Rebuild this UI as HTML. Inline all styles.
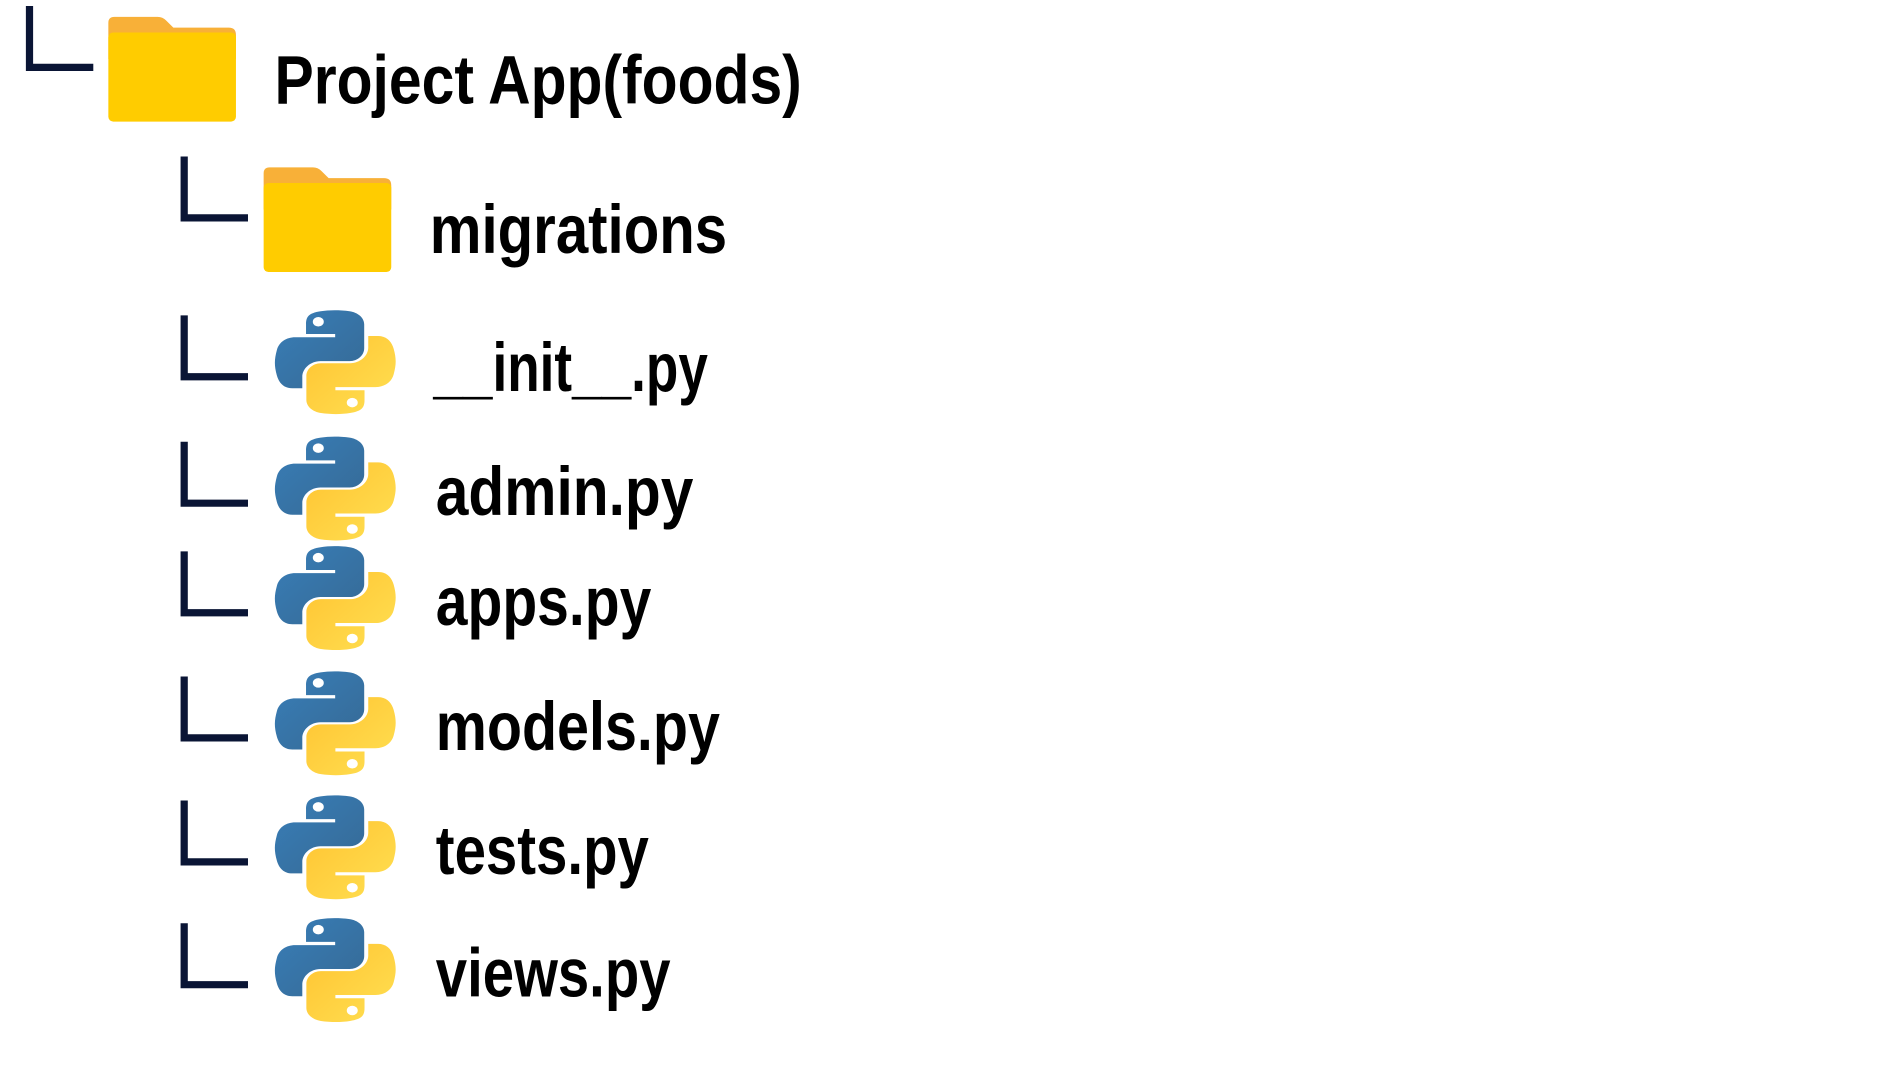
<!DOCTYPE html>
<html><head><meta charset="utf-8"><style>
html,body{margin:0;padding:0;background:#fff;}
svg{display:block;}
text{font-family:"Liberation Sans",sans-serif;font-weight:bold;fill:#000;}
</style></head><body>
<svg width="1878" height="1081" viewBox="0 0 1560 898" preserveAspectRatio="none" xmlns="http://www.w3.org/2000/svg">
<defs>
<linearGradient id="bl" x1="0" y1="0" x2="1" y2="1"><stop offset="0" stop-color="#387EB8"/><stop offset="1" stop-color="#366994"/></linearGradient>
<linearGradient id="yl" x1="0" y1="0" x2="1" y2="1"><stop offset="0" stop-color="#FFE052"/><stop offset="1" stop-color="#FFC331"/></linearGradient>
<g id="py">
<path fill="url(#bl)" d="M54.9,0.9c-4.6,0-9,0.4-12.8,1.1C30.8,4,28.8,8.1,28.8,15.8v10.1h26.6v3.4H18.8c-7.7,0-14.5,4.6-16.6,13.4c-2.4,10.1-2.5,16.4,0,26.9c1.9,7.8,6.4,13.4,14.1,13.4h9.1V70.9c0-8.8,7.6-16.5,16.6-16.5h26.6c7.4,0,13.3-6.1,13.3-13.5V15.8c0-7.2-6.1-12.6-13.3-13.8C64.1,1.2,59.4,0.9,54.9,0.9z"/>
<ellipse cx="40" cy="13" rx="5" ry="5" fill="#fff"/>
<g transform="rotate(180 55.5 55.5)">
<path fill="url(#yl)" d="M54.9,0.9c-4.6,0-9,0.4-12.8,1.1C30.8,4,28.8,8.1,28.8,15.8v10.1h26.6v3.4H18.8c-7.7,0-14.5,4.6-16.6,13.4c-2.4,10.1-2.5,16.4,0,26.9c1.9,7.8,6.4,13.4,14.1,13.4h9.1V70.9c0-8.8,7.6-16.5,16.6-16.5h26.6c7.4,0,13.3-6.1,13.3-13.5V15.8c0-7.2-6.1-12.6-13.3-13.8C64.1,1.2,59.4,0.9,54.9,0.9z"/>
<ellipse cx="40" cy="13" rx="5" ry="5" fill="#fff"/>
</g>
</g>
<g id="fold">
<path fill="#F8B038" d="M0,5 q0,-5 5,-5 h36 q4,0 7,3 l6,6 h46 q6,0 6,6 v20 h-106z"/>
<rect x="0" y="13" width="106" height="74" rx="4" fill="#FFCC00"/>
</g>
<path id="L" d="M0,0 V51 H53" fill="none" stroke="#0A1535" stroke-width="6"/>
</defs>

<use href="#L" x="24.5" y="5"/>
<use href="#fold" x="90" y="14"/>
<text x="228" y="86" font-size="57" textLength="438" lengthAdjust="spacingAndGlyphs">Project App(foods)</text>

<use href="#L" x="153" y="130"/>
<use href="#fold" x="219" y="139"/>
<text x="357" y="210" font-size="57" textLength="247" lengthAdjust="spacingAndGlyphs">migrations</text>

<use href="#L" x="153" y="262"/>
<g transform="translate(228 257) scale(0.91 0.79)"><use href="#py"/></g>
<text x="360" y="325" font-size="57" textLength="228" lengthAdjust="spacingAndGlyphs">__init__.py</text>

<use href="#L" x="153" y="367"/>
<g transform="translate(228 362) scale(0.91 0.79)"><use href="#py"/></g>
<text x="362" y="428" font-size="57" textLength="214" lengthAdjust="spacingAndGlyphs">admin.py</text>

<use href="#L" x="153" y="458"/>
<g transform="translate(228 453) scale(0.91 0.79)"><use href="#py"/></g>
<text x="362" y="519" font-size="57" textLength="179" lengthAdjust="spacingAndGlyphs">apps.py</text>

<use href="#L" x="153" y="562"/>
<g transform="translate(228 557) scale(0.91 0.79)"><use href="#py"/></g>
<text x="362" y="623" font-size="57" textLength="236" lengthAdjust="spacingAndGlyphs">models.py</text>

<use href="#L" x="153" y="665"/>
<g transform="translate(228 660) scale(0.91 0.79)"><use href="#py"/></g>
<text x="362" y="726" font-size="57" textLength="177" lengthAdjust="spacingAndGlyphs">tests.py</text>

<use href="#L" x="153" y="767"/>
<g transform="translate(228 762) scale(0.91 0.79)"><use href="#py"/></g>
<text x="362" y="828" font-size="57" textLength="195" lengthAdjust="spacingAndGlyphs">views.py</text>
</svg>
</body></html>
